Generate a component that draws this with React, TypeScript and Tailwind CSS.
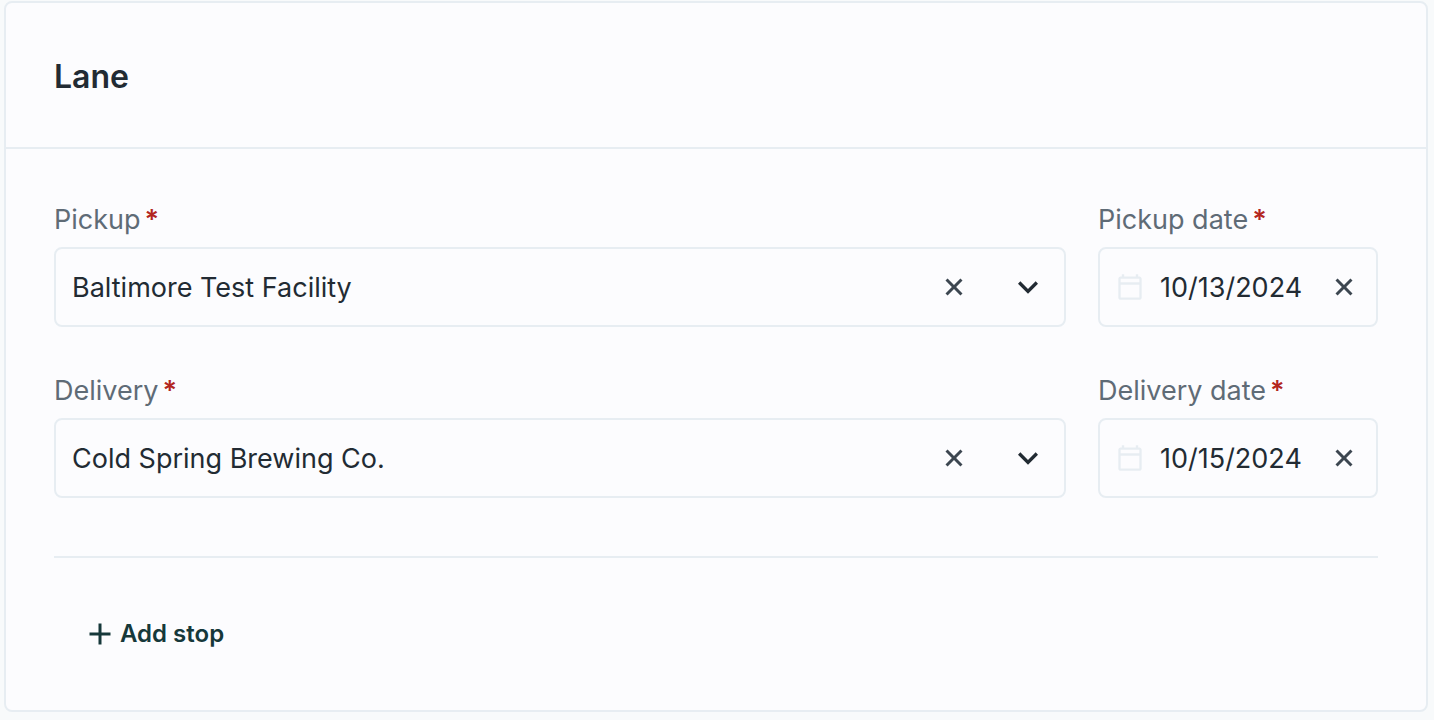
import { useState } from "react";

type IconProps = { d: string; className: string };

function Icon({ d, className }: IconProps) {
  return (
    <svg viewBox="0 0 24 24" fill="currentColor" aria-hidden="true" className={className}>
      <path d={d} />
    </svg>
  );
}

const CLOSE =
  "M19.3 6.5 17.5 4.7 12 10.2 6.5 4.7 4.7 6.5 10.2 12 4.7 17.5 6.5 19.3 12 13.8 17.5 19.3 19.3 17.5 13.8 12z";
const CHEVRON = "M7.41 8.59 12 13.17l4.59-4.58L18 10l-6 6-6-6z";
const PLUS = "M19 13h-6v6h-2v-6H5v-2h6V5h2v6h6z";
const CALENDAR =
  "M20 3h-1V1h-2v2H7V1H5v2H4c-1.1 0-2 .9-2 2v16c0 1.1.9 2 2 2h16c1.1 0 2-.9 2-2V5c0-1.1-.9-2-2-2zm0 18H4V10h16zm0-13H4V5h16z";

function FieldLabel({ id, text }: { id: string; text: string }) {
  return (
    <label htmlFor={id} className="flex items-center gap-1 text-[27px] leading-9 text-[#5f6b76]">
      {text}
      <span className="font-semibold text-[#b3261e]">*</span>
    </label>
  );
}

function ClearButton({ label, onClick }: { label: string; onClick: () => void }) {
  return (
    <button type="button" aria-label={label} onClick={onClick} className="z-10 text-[#3c4650]">
      <Icon d={CLOSE} className="size-7" />
    </button>
  );
}

function FacilityField({ id, label, facility }: { id: string; label: string; facility: string }) {
  const [value, setValue] = useState(facility);
  return (
    <div className="flex min-w-0 flex-1 flex-col gap-[9px]">
      <FieldLabel id={id} text={label} />
      <div className="grid h-20 grid-cols-[1fr_28px_40px] items-center gap-x-10 rounded-lg border-2 border-[#e7edf2] pr-4">
        <select
          id={id}
          value={value}
          onChange={(e) => setValue(e.target.value)}
          className="col-span-3 col-start-1 row-start-1 -mr-4 h-full appearance-none rounded-lg bg-transparent pt-0.5 pr-40 pl-4 text-[27px] text-[#222b33]"
        >
          <option value=""></option>
          <option value={facility}>{facility}</option>
        </select>
        <div className="col-start-2 row-start-1 flex">
          <ClearButton label={`Clear ${label}`} onClick={() => setValue("")} />
        </div>
        <Icon d={CHEVRON} className="pointer-events-none col-start-3 row-start-1 size-10 text-[#222b33]" />
      </div>
    </div>
  );
}

function DateField({ id, label, date }: { id: string; label: string; date: string }) {
  const [value, setValue] = useState(date);
  return (
    <div className="flex w-70 flex-col gap-[9px]">
      <FieldLabel id={id} text={label} />
      <div className="flex h-20 items-center rounded-lg border-2 border-[#e7edf2] pr-4.5 pl-4">
        <Icon d={CALENDAR} className="mr-4 size-7 shrink-0 text-[#e7edf2]" />
        <input
          id={id}
          type="text"
          value={value}
          onChange={(e) => setValue(e.target.value)}
          className="h-full min-w-0 flex-1 bg-transparent text-[27px] text-[#222b33]"
        />
        <ClearButton label={`Clear ${label}`} onClick={() => setValue("")} />
      </div>
    </div>
  );
}

export default function App() {
  return (
    <div className="min-h-screen bg-[#f8fafb] pt-px pr-1.5 pb-2 pl-1 font-['Inter',sans-serif]">
      <section className="rounded-lg border-2 border-[#e7edf2] bg-[#fcfcfe]">
        <header className="border-b-2 border-[#e7edf2] px-12 pt-[50px] pb-[46px]">
          <h2 className="text-[32px] leading-12 font-semibold text-[#222b33]">Lane</h2>
        </header>
        <div className="px-12 pt-[53px] pb-12">
          <div className="flex flex-col gap-[46px]">
            <div className="flex gap-8">
              <FacilityField id="pickup" label="Pickup" facility="Baltimore Test Facility" />
              <DateField id="pickup-date" label="Pickup date" date="10/13/2024" />
            </div>
            <div className="flex gap-8">
              <FacilityField id="delivery" label="Delivery" facility="Cold Spring Brewing Co." />
              <DateField id="delivery-date" label="Delivery date" date="10/15/2024" />
            </div>
          </div>
          <hr className="mt-14.5 border-t-2 border-[#e7edf2]" />
          <button
            type="button"
            className="mt-12 ml-7 flex h-14 items-center gap-0.5 text-2xl font-semibold text-[#16383a]"
          >
            <Icon d={PLUS} className="size-9" />
            Add stop
          </button>
        </div>
      </section>
    </div>
  );
}
